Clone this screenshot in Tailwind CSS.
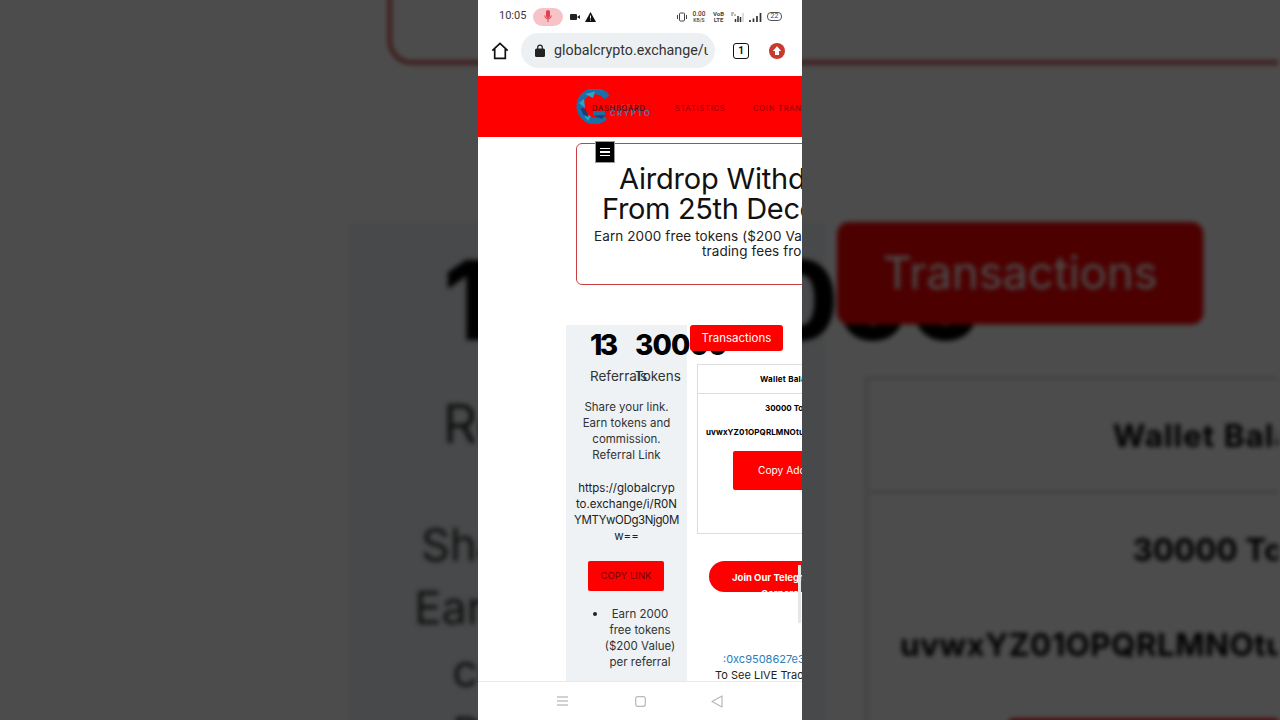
<!DOCTYPE html>
<html lang="en">
<head>
<meta charset="utf-8">
<title>Global Crypto</title>
<script src="https://cdn.jsdelivr.net/npm/@tailwindcss/browser@4"></script>
</head>
<body class="m-0 w-[1280px] h-[720px] overflow-hidden bg-[#4d4d4d] font-[Inter,sans-serif]">
<div class="relative w-[1280px] h-[720px] overflow-hidden flex justify-center">

  <!-- blurred, darkened enlargement behind the phone -->
  <div id="bg" aria-hidden="true" class="absolute left-[478px] top-0 w-[324px] h-[720px] pt-[137px] overflow-hidden bg-white origin-center scale-[3.94] blur-[0.7px] brightness-[0.3]"></div>

  <!-- phone -->
  <div class="relative w-[324px] h-[720px] bg-white flex flex-col overflow-hidden">

    <!-- status bar -->
    <div class="h-[32px] shrink-0 flex items-center pl-[21px] pr-[20px] pt-[1px] font-[Roboto,sans-serif]">
      <span class="text-[11px] text-[#3a3a3a] w-[34px]">10:05</span>
      <span class="w-[30px] h-[18px] rounded-full bg-[#f6c3c8] flex items-center justify-center">
        <svg width="8" height="13" viewBox="0 0 8 13"><rect x="2" y="0" width="4" height="8" rx="2" fill="#e2404f"/><path d="M.7 5.5a3.3 3.3 0 0 0 6.6 0M4 9v3" stroke="#e2404f" fill="none" stroke-width="1"/></svg>
      </span>
      <svg class="ml-[7px]" width="10" height="8" viewBox="0 0 10 8"><rect y="1" width="7" height="6" rx="1" fill="#222"/><path d="M7 4l3-2v4z" fill="#222"/></svg>
      <svg class="ml-[5px]" width="11" height="10" viewBox="0 0 11 10"><path d="M5.5 0L11 10H0z" fill="#111"/><path d="M5.5 3.5v3M5.5 7.5v1" stroke="#fff" stroke-width="1"/></svg>
      <div class="ml-auto flex items-center text-[#444]">
        <svg width="10" height="10" viewBox="0 0 10 10"><rect x="2.5" y="1" width="5" height="8" rx="1" fill="none" stroke="#444"/><path d="M.5 3v4M9.5 3v4" stroke="#444"/></svg>
        <span class="ml-[4px] w-[16px] text-[6.5px] leading-[6px] text-center font-medium">0.00<br><span class="text-[5px]">KB/S</span></span>
        <span class="ml-[4px] w-[15px] text-[6px] leading-[5.5px] text-center font-bold">VoB<br>LTE</span>
        <svg class="ml-[4px]" width="14" height="10" viewBox="0 0 14 10"><path d="M1 1h3M5 2v2M1 3h2" stroke="#777"/><path d="M5.5 10V7M8 10V4M10.5 10V5" stroke="#333" stroke-width="1.5"/><path d="M13 10V1" stroke="#bbb"/></svg>
        <svg class="ml-[5px]" width="13" height="10" viewBox="0 0 13 10"><path d="M1 10V8M4.5 10V6.5M8 10V4M11.5 10V1" stroke="#333" stroke-width="1.7"/></svg>
        <span class="ml-[5px] w-[15px] h-[9px] rounded-[4px] border border-[#555] text-[7px] leading-[7px] text-center">22</span>
      </div>
    </div>

    <!-- browser bar -->
    <div class="h-[44px] shrink-0 flex items-center pb-[7px] font-[Roboto,sans-serif]">
      <svg class="ml-[13px]" width="18" height="18" viewBox="0 0 18 18"><path d="M1.3 8.6L9 1.5l7.7 7.1M3.7 7v9.3h10.6V7" fill="none" stroke="#111" stroke-width="1.7" stroke-linejoin="miter"/></svg>
      <div class="ml-[12px] w-[194px] h-[35px] rounded-full bg-[#edf0f2] flex items-center pl-[14px] pr-[7px] overflow-hidden">
        <svg class="shrink-0" width="10" height="13" viewBox="0 0 10 13"><path d="M2.7 5V3.4a2.3 2.3 0 0 1 4.6 0V5" fill="none" stroke="#222" stroke-width="1.2"/><rect y="4.5" width="10" height="8.5" rx="1.5" fill="#222"/></svg>
        <span class="ml-[9px] text-[14.3px] text-[#333] whitespace-nowrap overflow-hidden">globalcrypto.exchange/u</span>
      </div>
      <span class="ml-[18px] w-[16px] h-[16px] rounded-[3px] border-[1.5px] border-[#111] flex items-center justify-center text-[10px] font-bold text-[#111]">1</span>
      <svg class="ml-[20px]" width="16" height="16" viewBox="0 0 16 16"><circle cx="8" cy="8" r="8" fill="#c93a2e"/><path d="M8 3.2L12.2 8H10v4H6V8H3.8z" fill="#fff"/></svg>
    </div>

    <!-- site header -->
    <div class="relative h-[61px] shrink-0 bg-[#ff0000] overflow-hidden pl-[98px] pt-[13px]">
      <div class="relative w-[76px] h-[35px]">
        <svg width="35" height="35" viewBox="0 0 35 35">
          <path d="M31 8.5A15 15 0 1 0 29 28" fill="none" stroke="#1c6ea6" stroke-width="6.5"/>
          <path d="M9 5L19 2.5 17 9zM3 14l5-4 1 9zM7 25l8 2-3 5z" fill="#29a5cc"/>
          <path d="M4.5 19l5 1 3 8-5-2zM19 27l10-1-3 4z" fill="#173f78"/>
          <path d="M17 22h12v4H17z" fill="#1c6ea6"/>
        </svg>
        <span class="absolute left-[34px] top-[14px] text-[6px] leading-[7px] tracking-[1.5px] text-[#d93a3a]">GLOBAL</span>
        <span class="absolute left-[34px] top-[20px] text-[8px] leading-[9px] tracking-[1.4px] font-bold text-[#4f6fa8]">CRYPTO</span>
      </div>
      <nav class="absolute left-[114px] top-[28px] flex text-[7.5px] leading-[9px] tracking-[0.8px] whitespace-nowrap">
        <span class="w-[83px] text-[#2a1010]">DASHBOARD</span>
        <span class="w-[78px] text-[#8a0505]">STATISTICS</span>
        <span class="text-[#8a0505]">COIN TRANSFER</span>
      </nav>
    </div>

    <!-- page body -->
    <div id="body" class="relative h-[544px] shrink-0 overflow-hidden bg-white text-[#222]">
      <div class="ml-[98px] mt-[6px] w-[462px] h-[142px] rounded-[6px] border border-[#c84040] pt-[20px] whitespace-nowrap text-[#222]">
        <div class="text-[29px] leading-[30px] tracking-[-0.2px] text-[#111] pl-[42px]">Airdrop Withdrawal</div>
        <div class="text-[29px] leading-[30px] tracking-[-0.35px] text-[#111] pl-[25px]">From 25th December</div>
        <div class="mt-[5px] text-[13.5px] leading-[15px] tracking-[0.1px] pl-[17px]">Earn 2000 free tokens ($200 Value) per referral and</div>
        <div class="text-[13.5px] leading-[15px] tracking-[0.1px] pl-[125px]">trading fees from referrals</div>
      </div>
      <div class="absolute left-[117px] top-[4px] w-[20px] h-[22px] bg-black border border-[#999] flex flex-col items-center justify-center gap-[2px]">
        <i class="block w-[10px] h-[1.5px] bg-white"></i><i class="block w-[10px] h-[1.5px] bg-white"></i><i class="block w-[10px] h-[1.5px] bg-white"></i>
      </div>

      <div class="flex mt-[40px] pl-[88px]">
        <!-- referral column -->
        <div class="w-[121px] shrink-0 h-[400px] bg-[#eef2f5] text-[11.5px] leading-[16px] text-center text-[#333]">
          <div class="flex pl-[24px] h-[43px] text-left">
            <div class="w-[45px] shrink-0 text-[28px] leading-[40px] font-extrabold tracking-[-2.5px] text-black">13</div>
            <div class="shrink-0 text-[28px] leading-[40px] font-extrabold tracking-[-0.9px] text-black">30000</div>
          </div>
          <div class="flex pl-[24px] h-[31px] text-[13.5px] leading-[16px] text-left whitespace-nowrap">
            <div class="w-[45px] shrink-0">Referrals</div>
            <div class="shrink-0">Tokens</div>
          </div>
          <p>Share your link.<br>Earn tokens and<br>commission.<br>Referral Link</p>
          <p class="mt-[17px] text-[#222]">https://globalcryp<br>to.exchange/i/R0N<br><span class="tracking-[-0.4px]">YMTYwODg3Njg0M</span><br>w==</p>
          <div class="ml-[22px] mt-[17px] w-[76px] h-[30px] rounded-[2px] bg-[#ff0000] text-[#700404] text-[9.5px] leading-[30px]">COPY LINK</div>
          <ul class="mt-[15px] relative">
            <li class="pl-[27px]"><i class="absolute left-[27px] top-[6px] w-[4px] h-[4px] rounded-full bg-[#222]"></i>Earn 2000<br>free tokens<br>($200 Value)<br>per referral</li>
          </ul>
        </div>
        <!-- wallet column -->
        <div class="w-[320px] shrink-0">
          <div class="ml-[10px] mt-[39px] w-[300px] h-[170px] border border-[#ddd] whitespace-nowrap text-black font-bold text-[8px]">
            <div class="h-[29px] border-b border-[#ddd] pl-[62px] leading-[28px] tracking-[0.25px]">Wallet Balance</div>
            <div class="pl-[67px] mt-[8px] leading-[12px]">30000 Tokens</div>
            <div class="pl-[8px] mt-[12px] leading-[12px] tracking-[0.1px]">uvwxYZ01OPQRLMNOtu</div>
            <div class="ml-[35px] mt-[13px] w-[200px] h-[39px] rounded-[2px] bg-[#ff0000] text-white font-normal text-[10.2px] leading-[39px] pl-[25px]">Copy Address</div>
          </div>
          <div class="relative ml-[22px] mt-[27px] w-[260px] h-[31px] rounded-l-full bg-[#ff0000] overflow-hidden text-white font-bold text-[9.5px] leading-[16px] pl-[23px] pt-[9px] whitespace-nowrap">
            Join Our Telegram<br><span class="ml-[29px]">Corners</span>
          </div>
          <div class="mt-[59px] pl-[36px] text-[11px] leading-[16px] whitespace-nowrap text-[#2a7db8]">:0xc9508627e3</div>
          <div class="pl-[28px] text-[11px] leading-[16px] whitespace-nowrap text-[#222]">To See LIVE Trading</div>
        </div>
      </div>

      <div class="absolute left-[212px] top-[188px] w-[93px] h-[26px] rounded-[3px] bg-[#ff0000] text-white text-[11.5px] leading-[26px] text-center">Transactions</div>
      <div class="absolute left-[320px] top-[428px] w-[3px] h-[58px] bg-[#e6e6e6]"></div>
    </div>

    <!-- android nav bar -->
    <div class="h-[39px] shrink-0 bg-white border-t border-[#e8e8e8] flex items-center">
      <svg class="ml-[79px]" width="11" height="10" viewBox="0 0 11 10"><path d="M0 1h11M0 5h11M0 9h11" stroke="#c4c4c4" stroke-width="1.3"/></svg>
      <svg class="ml-[67px]" width="11" height="11" viewBox="0 0 11 11"><rect x=".7" y=".7" width="9.6" height="9.6" rx="2" fill="none" stroke="#b8b8b8" stroke-width="1.2"/></svg>
      <svg class="ml-[65px]" width="12" height="13" viewBox="0 0 12 13"><path d="M11 1v11L1 6.5z" fill="none" stroke="#b8b8b8" stroke-width="1.2" stroke-linejoin="round"/></svg>
    </div>
  </div>
</div>
<script>document.getElementById('bg').appendChild(document.getElementById('body').cloneNode(true)).removeAttribute('id');</script>
</body>
</html>
